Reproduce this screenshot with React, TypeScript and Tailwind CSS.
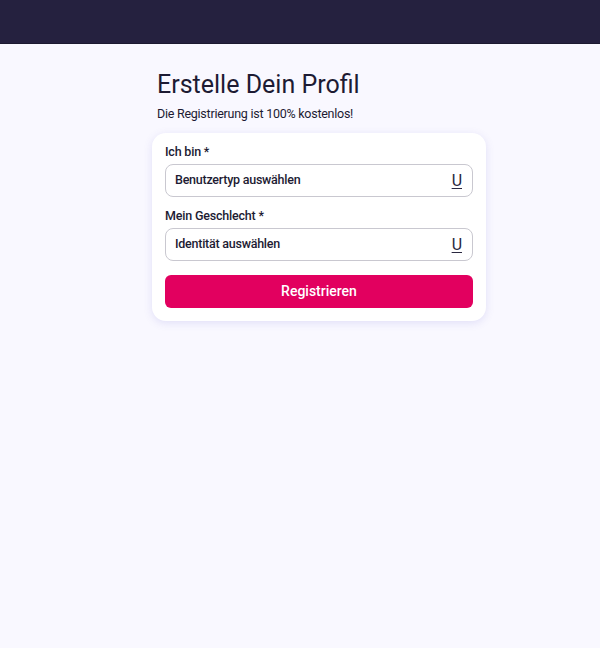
import React from "react";

function SelectField({ label, placeholder }: { label: string; placeholder: string }) {
    return (
        <div className="flex flex-col">
            <label className="text-[12.5px] font-medium tracking-[-0.2px] text-[#1d1b33] leading-4 mb-1">{label}</label>
            <div className="h-[33px] rounded-[8px] border border-[#c9c8d0] bg-white flex items-center justify-between pl-[9px] pr-[10px]">
                <span className="text-[12.5px] font-medium tracking-[-0.25px] text-[#1d1b33]">{placeholder}</span>
                <span className="text-[16px] text-[#2a2840] underline underline-offset-2 leading-none">U</span>
            </div>
        </div>
    );
}

export default function App() {
    return (
        <main className="min-h-[648px] bg-[#f9f8ff] font-['Roboto',sans-serif]">
            <header className="h-[44px] bg-[#25213f] border-b border-[#1c1930]" />

            <div className="ml-[152px] w-[334px] pt-[25px]">
                <h1 className="pl-[5px] text-[25px] leading-[32px] text-[#1d1b33]">Erstelle Dein Profil</h1>
                <p className="pl-[5px] mt-[5px] text-[12.5px] tracking-[-0.25px] leading-4 text-[#1d1b33]">Die Registrierung ist 100% kostenlos!</p>

                <div className="mt-[11px] bg-white rounded-[14px] shadow-[0_2px_8px_rgba(90,80,200,0.15)] px-[13px] pt-[11px] pb-[13px] flex flex-col">
                    <SelectField label="Ich bin *" placeholder="Benutzertyp auswählen" />
                    <div className="h-[11px]" />
                    <SelectField label="Mein Geschlecht *" placeholder="Identität auswählen" />
                    <button className="mt-[14px] h-[33px] rounded-[6px] bg-[#e2005f] text-white text-[14px] font-medium">
                        Registrieren
                    </button>
                </div>
            </div>
        </main>
    );
}
